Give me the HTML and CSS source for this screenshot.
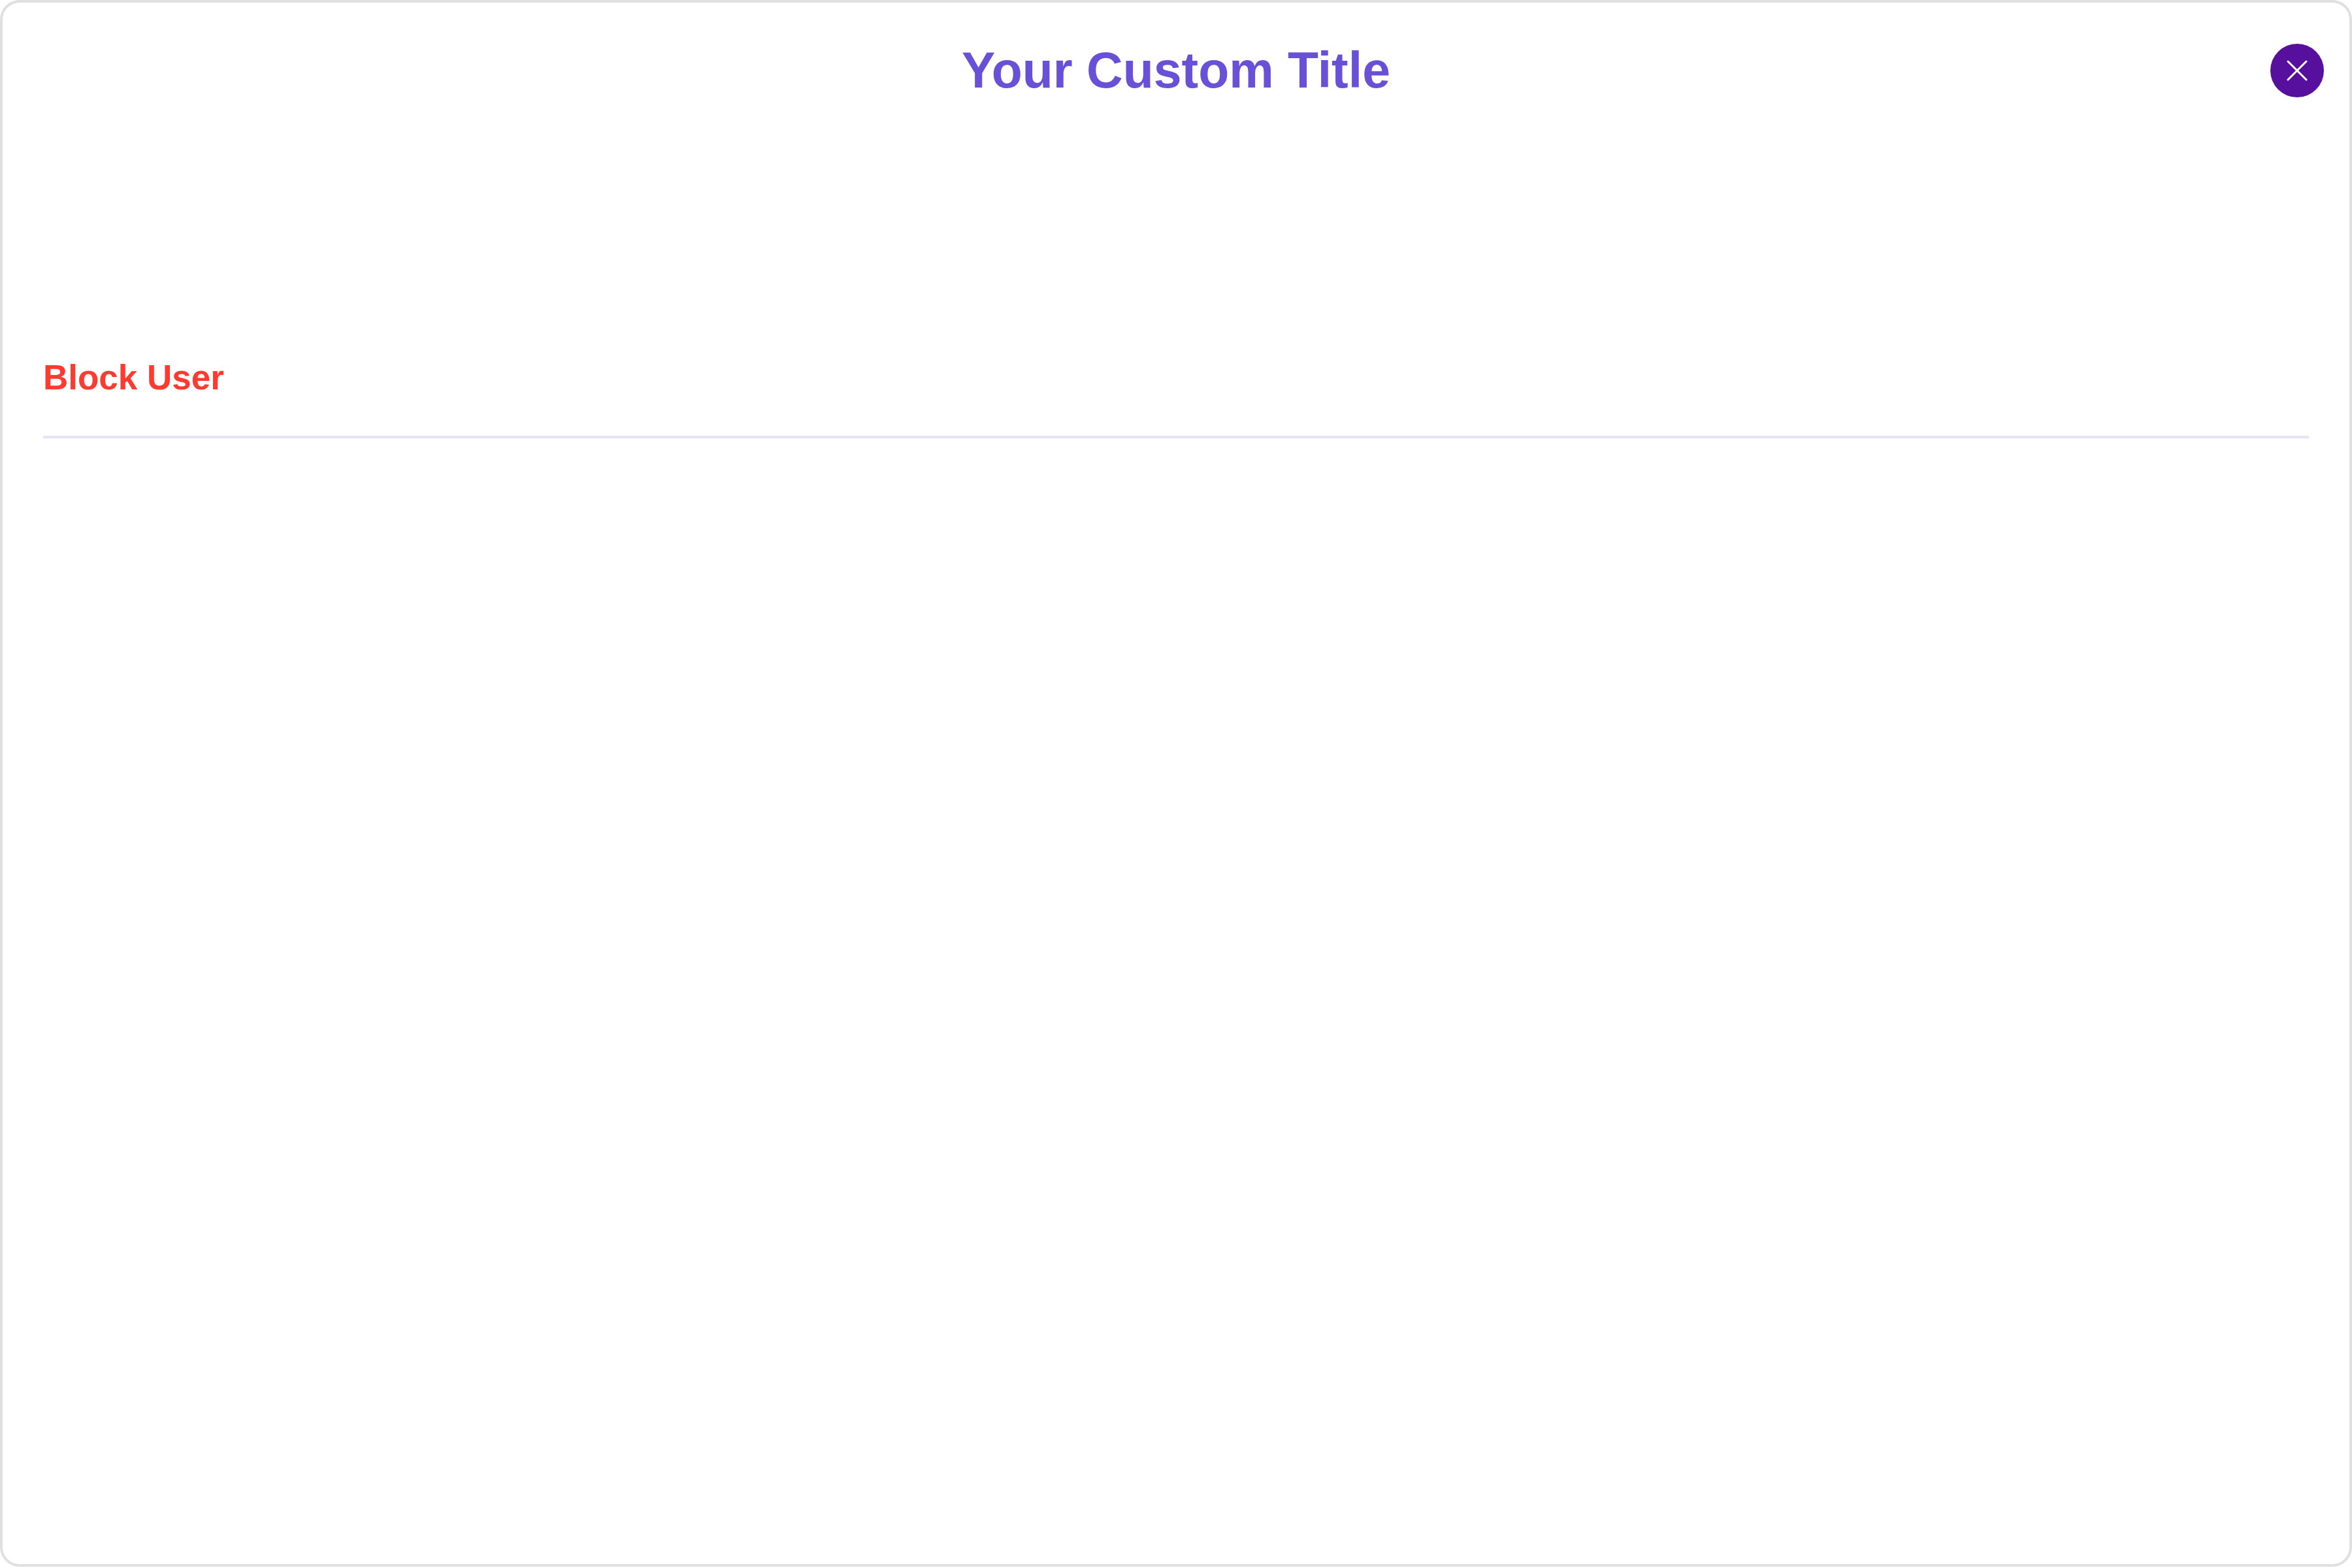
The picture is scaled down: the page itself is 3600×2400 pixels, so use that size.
FILE: index.html
```html
<!DOCTYPE html>
<html lang="en">
<head>
<meta charset="utf-8">
<title>Your Custom Title</title>
<link rel="stylesheet" href="styles.css">
</head>
<body>
<main class="panel">
  <header class="panel-header">
    <h1 class="panel-title">Your Custom Title</h1>
    <button class="close-button" type="button" aria-label="Close">
      <svg class="close-icon" viewBox="0 0 32 32" aria-hidden="true"><path d="M2 2 30 30M30 2 2 30"/></svg>
    </button>
  </header>
  <section class="actions">
    <button class="action" type="button">Block User</button>
  </section>
</main>
</body>
</html>
```
FILE: styles.css
```css
* { box-sizing: border-box; }
body {
  margin: 0;
  background: #fff;
  font-family: "Liberation Sans", Arial, sans-serif;
}
.panel {
  min-height: calc(100vh - 2px);
  border: 4px solid #e0e0e0;
  border-radius: 30px;
  background: #fff;
}
.panel-header {
  display: grid;
  grid-template-columns: 1fr auto 1fr;
  align-items: center;
  padding: 60px 39px;
}
.panel-title {
  grid-column: 2;
  margin: 0;
  color: #6851d6;
  font-size: 77px;
  line-height: 87px;
  font-weight: 700;
}
.close-button {
  justify-self: end;
  display: flex;
  align-items: center;
  justify-content: center;
  width: 82px;
  height: 82px;
  padding: 0;
  border: 0;
  border-radius: 50%;
  background: #570f9e;
  cursor: pointer;
}
.close-icon {
  width: 32px;
  height: 32px;
  fill: none;
  stroke: #fff;
  stroke-width: 3;
  stroke-linecap: round;
}
.actions { padding: 276px 62px 0; }
.action {
  display: block;
  width: 100%;
  padding: 61px 0 59px;
  border: 0;
  border-bottom: 4px solid #e6e3f7;
  background: none;
  color: #ff3b30;
  font: 700 53px/60px "Liberation Sans", Arial, sans-serif;
  text-align: left;
  cursor: pointer;
}
```
